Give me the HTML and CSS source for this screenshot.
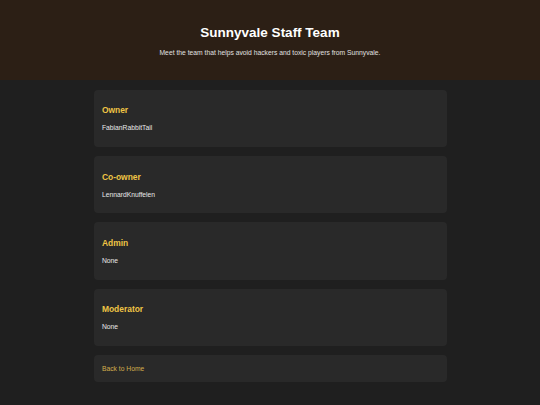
FILE: index.html
```html
<!DOCTYPE html>
<html lang="en">
<head>
<meta charset="utf-8">
<title>Sunnyvale Staff Team</title>
<link rel="stylesheet" href="styles.css">
</head>
<body>
<header class="hero">
  <h1 class="hero-title">Sunnyvale Staff Team</h1>
  <p class="hero-sub">Meet the team that helps avoid hackers and toxic players from Sunnyvale.</p>
</header>
<main class="staff">
  <section class="card">
    <h3 class="role">Owner</h3>
    <p class="member">FabianRabbitTail</p>
  </section>
  <section class="card">
    <h3 class="role">Co-owner</h3>
    <p class="member">LennardKnuffelen</p>
  </section>
  <section class="card">
    <h3 class="role">Admin</h3>
    <p class="member">None</p>
  </section>
  <section class="card">
    <h3 class="role">Moderator</h3>
    <p class="member">None</p>
  </section>
  <nav class="card card-back">
    <a class="back-link" href="#">Back to Home</a>
  </nav>
</main>
</body>
</html>
```

FILE: styles.css
```css
html, body {
  margin: 0;
  padding: 0;
}
body {
  background: #1f1f1f;
  font-family: "Liberation Sans", Arial, sans-serif;
  color: #e6e6e6;
  min-height: 405px;
}
.hero {
  background: #2c1f15;
  text-align: center;
  padding: 25px 20px 24px;
}
.hero-title {
  margin: 0;
  font-size: 13.5px;
  font-weight: bold;
  color: #ffffff;
  line-height: 15.5px;
}
.hero-sub {
  margin: 8px 0 0;
  font-size: 6.75px;
  line-height: 7.8px;
  color: #e0e0e0;
}
.staff {
  width: 353px;
  margin: 9.5px auto 0;
  display: flex;
  flex-direction: column;
  gap: 9px;
}
.card {
  background: #292929;
  border-radius: 4px;
  padding: 16.5px 8.4px 15px;
}
.role {
  margin: 0 0 8.3px;
  font-size: 8.45px;
  line-height: 9.7px;
  font-weight: bold;
  color: #f0c445;
}
.member {
  margin: 0;
  font-size: 6.75px;
  line-height: 7.8px;
  color: #e8e8e8;
}
.card-back {
  padding: 7px 8.4px 9px;
  line-height: 7.8px;
}
.back-link {
  font-size: 6.75px;
  line-height: 7.8px;
  color: #d2ae4c;
  text-decoration: none;
}
```
